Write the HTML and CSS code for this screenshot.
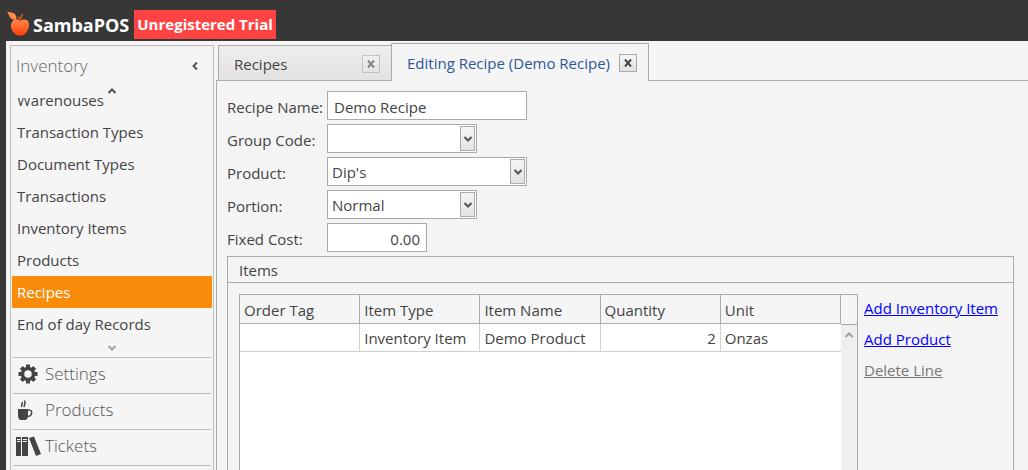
FILE: index.html
```html
<!DOCTYPE html>
<html lang="en">
<head>
  <meta charset="UTF-8" />
  <title>SambaPOS</title>
  <link rel="stylesheet" href="styles.css">
</head>
<body>

  <header class="topbar">
    <svg class="logo" width="24" height="26" viewBox="0 0 24 26" aria-hidden="true">
      <defs>
        <linearGradient id="apple" x1="0" y1="0" x2="0" y2="1">
          <stop offset="0" stop-color="#ff8a48" />
          <stop offset="1" stop-color="#ff3c08" />
        </linearGradient>
      </defs>
      <path fill="url(#apple)" d="M13 10C16 8 20 8 21.500 11C23 15 21 20 18 23C16 25 14 24.500 13 24.500C11 25 9 24 7 22C4 19 3 14 5 11C7 8 11 8 13 10Z" />
      <path fill="#ff8a4a" d="M0 1C5 1 10 2 9.500 8.500C5 10 2.500 6 2 4Z" />
      <path fill="none" stroke="#e0562a" stroke-width="1.500" d="M13 10L11.500 5.500M13.500 8L15.500 3" />
    </svg>
    <span class="brand">SambaPOS</span>
    <span class="trial">Unregistered Trial</span>
  </header>

  <div class="layout">
    <nav class="sidebar">
      <div class="sidebar-head">
        <h1>Inventory</h1>
        <button type="button" class="plain" aria-label="Collapse">
          <svg width="8" height="8" viewBox="0 0 8 8"><path class="chevron" d="M6 0.500L2.500 4L6 7.500" /></svg>
        </button>
      </div>
      <button type="button" class="plain scroll-up" aria-label="Scroll up">
        <svg width="8" height="6" viewBox="0 0 8 6"><path class="chevron" d="M0.500 5L4 1.500L7.500 5" /></svg>
      </button>
      <ul class="menu">
        <li><a href="#">Warehouses</a></li>
        <li><a href="#">Transaction Types</a></li>
        <li><a href="#">Document Types</a></li>
        <li><a href="#">Transactions</a></li>
        <li><a href="#">Inventory Items</a></li>
        <li><a href="#">Products</a></li>
        <li><a href="#" class="active">Recipes</a></li>
        <li><a href="#">End of day Records</a></li>
      </ul>
      <button type="button" class="plain scroll-down" aria-label="Scroll down">
        <svg width="8" height="6" viewBox="0 0 8 6"><path class="chevron" d="M0.500 1L4 4.500L7.500 1" /></svg>
      </button>
      <ul class="sections">
        <li><a href="#">
          <svg width="26" height="22" viewBox="0 0 26 22" aria-hidden="true">
            <circle cx="13" cy="11" r="5.500" fill="none" stroke="#444" stroke-width="3.500" />
            <path stroke="#444" stroke-width="4" d="M13 1.500V5M13 17V20.500M3.500 11H7M19 11H22.500M6.300 4.300L8.800 6.800M17.200 15.200L19.700 17.700M19.700 4.300L17.200 6.800M8.800 15.200L6.300 17.700" />
          </svg>
          Settings</a></li>
        <li><a href="#">
          <svg width="26" height="22" viewBox="0 0 26 22" aria-hidden="true">
            <path fill="#444" d="M3 10H13V16C13 19 12 21 10 21H6C4 21 3 19 3 16Z" />
            <path fill="none" stroke="#444" stroke-width="1.500" d="M13 11C18 10 18 17 12.500 17.500M7 8C5 6 8.500 5.500 7 3M9.500 8C8 5.500 11.500 5 9.500 1.500" />
          </svg>
          Products</a></li>
        <li><a href="#">
          <svg width="26" height="22" viewBox="0 0 26 22" aria-hidden="true">
            <path fill="#444" d="M1 2H6V21H1ZM7 2H13V21H7ZM14 3L19 1.500L26 19L21 21Z" />
            <path stroke="#f5f5f5" d="M2 4.500H5.500M2 6.500H5.500M8 4.500H12M8 6.500H12" />
          </svg>
          Tickets</a></li>
        <li></li>
      </ul>
    </nav>

    <main class="main">
      <div class="tabs">
        <div class="tab">
          <span>Recipes</span>
          <button type="button" class="close" aria-label="Close Recipes">
            <svg width="8" height="8" viewBox="0 0 8 8"><path d="M1 0.500L7 7.500M7 0.500L1 7.500" /></svg>
          </button>
        </div>
        <div class="tab current">
          <span>Editing Recipe (Demo Recipe)</span>
          <button type="button" class="close" aria-label="Close Editing Recipe">
            <svg width="8" height="8" viewBox="0 0 8 8"><path d="M1 0.500L7 7.500M7 0.500L1 7.500" /></svg>
          </button>
        </div>
      </div>

      <div class="page">
        <form class="fields">
          <label for="recipeName">Recipe Name:</label>
          <input type="text" id="recipeName" class="wide" value="Demo Recipe" />

          <label for="groupCode">Group Code:</label>
          <div class="combo">
            <select id="groupCode"><option></option></select>
            <span class="drop"><svg width="8" height="6" viewBox="0 0 8 6"><path class="chevron" d="M0.500 1L4 4.500L7.500 1" /></svg></span>
          </div>

          <label for="product">Product:</label>
          <div class="combo wide">
            <select id="product"><option>Dip's</option></select>
            <span class="drop"><svg width="8" height="6" viewBox="0 0 8 6"><path class="chevron" d="M0.500 1L4 4.500L7.500 1" /></svg></span>
          </div>

          <label for="portion">Portion:</label>
          <div class="combo">
            <select id="portion"><option>Normal</option></select>
            <span class="drop"><svg width="8" height="6" viewBox="0 0 8 6"><path class="chevron" d="M0.500 1L4 4.500L7.500 1" /></svg></span>
          </div>

          <label for="fixedCost">Fixed Cost:</label>
          <input type="text" id="fixedCost" class="cost" value="0.00" />
        </form>

        <section class="items">
          <h2>Items</h2>
          <div class="items-body">
            <div class="grid">
              <table>
                <thead>
                  <tr>
                    <th>Order Tag</th>
                    <th>Item Type</th>
                    <th>Item Name</th>
                    <th>Quantity</th>
                    <th>Unit</th>
                  </tr>
                </thead>
                <tbody>
                  <tr>
                    <td></td>
                    <td>Inventory Item</td>
                    <td>Demo Product</td>
                    <td class="number">2</td>
                    <td>Onzas</td>
                  </tr>
                </tbody>
              </table>
              <div class="scrollbar">
                <button type="button" class="plain" aria-label="Scroll rows up">
                  <svg width="8" height="6" viewBox="0 0 8 6"><path class="chevron" d="M0.500 5L4 1.500L7.500 5" /></svg>
                </button>
              </div>
            </div>
            <div class="actions">
              <a href="#">Add Inventory Item</a>
              <a href="#">Add Product</a>
              <a href="#" class="disabled">Delete Line</a>
            </div>
          </div>
        </section>
      </div>
    </main>
  </div>

</body>
</html>
```

FILE: styles.css
```css
* {
  box-sizing: border-box;
}
body {
  display: flex;
  flex-direction: column;
  height: 100vh;
  margin: 0;
  overflow: hidden;
  background-color: #373737;
  color: #444;
  font-family: "Open Sans", "Noto Sans", sans-serif;
  font-size: 15px;
  line-height: 20px;
}
h1, h2, ul {
  margin: 0;
  padding: 0;
  font-weight: 400;
  list-style: none;
}
a {
  color: inherit;
  text-decoration: none;
}
input, select, button {
  font: inherit;
  color: inherit;
}
svg {
  display: block;
}
.chevron {
  fill: none;
  stroke: #555;
  stroke-width: 2;
}
.plain {
  display: flex;
  padding: 0;
  border: none;
  background: none;
  cursor: pointer;
}

/* Title bar */
.topbar {
  display: flex;
  align-items: flex-end;
  flex: none;
  height: 41px;
  padding: 0 7px 2px;
  color: #fff;
  font-weight: 700;
}
.logo {
  margin-bottom: 2px;
}
.brand {
  margin: 0 5px 0 2px;
  font-size: 18px;
  line-height: 28px;
}
.trial {
  padding: 0 3px;
  background-color: #ff4343;
  font-size: 15px;
  line-height: 29px;
}

.layout {
  display: flex;
  flex: 1;
  min-height: 0;
  margin-left: 6px;
  padding: 2px 0 0 4px;
  background-color: #f5f5f5;
}

/* Sidebar */
.sidebar {
  flex: none;
  width: 204px;
  margin-top: 2px;
  border: 1px solid #bbb;
  border-bottom: none;
  padding: 0 1px;
  overflow: hidden;
}
.sidebar-head {
  display: flex;
  align-items: center;
  justify-content: space-between;
  height: 40px;
  padding: 0 13px 0 4px;
}
.sidebar-head h1 {
  color: #666;
  font-size: 17px;
  font-weight: 300;
}
.scroll-up {
  margin: 2px auto 4px;
}
.menu {
  display: flex;
  flex-direction: column;
  justify-content: flex-end;
  height: 242px;
  overflow: hidden;
}
.menu a {
  display: block;
  padding: 0 5px;
  line-height: 32px;
}
.menu .active {
  background-color: #f88c0a;
  color: #fff;
}
.scroll-down {
  margin: 5px auto 6px;
  opacity: 0.5;
}
.sections {
  margin: 0 1px;
}
.sections li {
  height: 36px;
  border-top: 1px solid #bbb;
}
.sections a {
  display: flex;
  align-items: center;
  gap: 4px;
  height: 32px;
  padding-left: 2px;
  color: #555;
  font-size: 17px;
  font-weight: 300;
}

/* Tabs */
.main {
  display: flex;
  flex: 1;
  flex-direction: column;
  min-width: 0;
  margin-left: 2px;
}
.tabs {
  display: flex;
  align-items: flex-end;
  flex: none;
  height: 38px;
  padding-left: 2px;
  background: linear-gradient(#aaa, #aaa) bottom / 100% 1px no-repeat;
}
.tab {
  display: flex;
  align-items: center;
  justify-content: space-between;
  width: 173px;
  height: 36px;
  padding: 2px 11px 0 15px;
  border: 1px solid #aaa;
  border-right: none;
  background: linear-gradient(#eee, #e2e2e2);
}
.tab.current {
  width: auto;
  height: 38px;
  gap: 9px;
  padding: 0 11px 0 15px;
  border-right: 1px solid #aaa;
  border-bottom: none;
  background: #f5f5f5;
  color: #2b579a;
}
.close {
  display: flex;
  align-items: center;
  justify-content: center;
  width: 18px;
  height: 18px;
  padding: 0;
  border: 1px solid #aaa;
  background: linear-gradient(#f5f5f5, #e2e2e2);
}
.close path {
  stroke: #444;
  stroke-width: 2;
}
.tab:not(.current) .close {
  opacity: 0.6;
}

/* Recipe form */
.page {
  display: flex;
  flex: 1;
  flex-direction: column;
  min-height: 0;
  padding: 10px 14px 0 10px;
  border-left: 1px solid #aaa;
  background-color: #f4f4f4;
}
.fields {
  display: grid;
  grid-template-columns: 100px 1fr;
  grid-auto-rows: 29px;
  row-gap: 4px;
  flex: none;
}
.fields label {
  line-height: 32px;
  white-space: nowrap;
}
.fields input, .fields select {
  width: 100%;
  height: 100%;
  border: 1px solid #aaa;
  border-radius: 0;
  background-color: #fff;
}
.fields input {
  padding: 2px 6px 0;
}
.fields select {
  appearance: none;
  padding: 1px 4px 0;
}
.combo {
  position: relative;
  width: 150px;
}
.fields .wide {
  width: 200px;
}
.fields .cost {
  width: 100px;
  text-align: right;
}
.drop {
  position: absolute;
  top: 2px;
  right: 2px;
  bottom: 2px;
  display: flex;
  align-items: center;
  justify-content: center;
  width: 15px;
  border: 1px solid #aaa;
  background: linear-gradient(#f5f5f5, #e2e2e2);
  pointer-events: none;
}

/* Items */
.items {
  display: flex;
  flex: 1;
  flex-direction: column;
  min-height: 0;
  margin-top: 4px;
  border: 1px solid #aaa;
  border-bottom: none;
}
.items h2 {
  flex: none;
  padding: 3px 11px 2px;
  border-bottom: 1px solid #aaa;
  font-size: 15px;
}
.items-body {
  display: flex;
  flex: 1;
  min-height: 0;
  padding: 11px 0 0 11px;
}
.grid {
  display: flex;
  flex: 1;
  align-items: flex-start;
  border: 1px solid #aaa;
  border-bottom: none;
  background-color: #fff;
}
table {
  flex: 1;
  width: 100%;
  border-collapse: separate;
  border-spacing: 0;
  table-layout: fixed;
}
th, td {
  height: 28px;
  padding: 1px 4px 0;
  border-right: 1px solid #d0d0d0;
  border-bottom: 1px solid #d0d0d0;
  font-weight: 400;
  text-align: left;
}
th {
  height: 29px;
  padding-top: 2px;
  border-color: #aaa;
  background-color: #f5f5f5;
}
td:last-child {
  border-right: none;
}
td.number {
  text-align: right;
}
.scrollbar {
  flex: none;
  align-self: stretch;
  width: 16px;
  background-color: #efefef;
}
.scrollbar::before {
  content: "";
  display: block;
  height: 29px;
  border-bottom: 1px solid #aaa;
  background-color: #f5f5f5;
}
.scrollbar .plain {
  margin: 7px auto 0;
  opacity: 0.5;
}
.actions {
  display: flex;
  flex: none;
  flex-direction: column;
  align-items: flex-start;
  gap: 11px;
  width: 155px;
  padding: 4px 0 0 6px;
}
.actions a {
  color: #00f;
  text-decoration: underline;
}
.actions .disabled {
  color: #777;
}
```
